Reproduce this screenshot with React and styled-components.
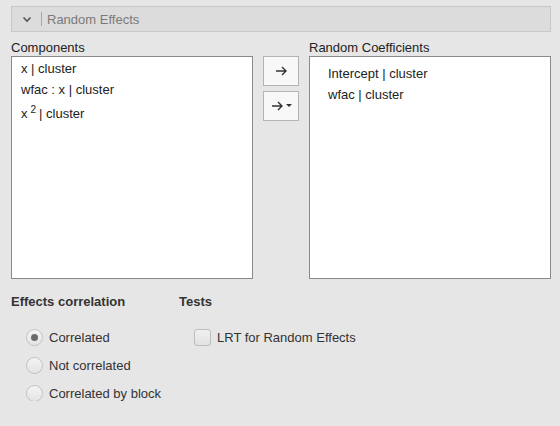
import React from "react";
import styled, { createGlobalStyle } from "styled-components";

const GlobalStyle = createGlobalStyle`
  html, body {
    margin: 0;
    padding: 0;
    background: #e6e6e6;
    font-family: "Liberation Sans", Arial, sans-serif;
    font-size: 13px;
    color: #333333;
  }
`;

const Page = styled.div`
  padding: 6px 10px 0 11px;
  width: 540px;
`;

const SectionHeader = styled.div`
  display: flex;
  align-items: center;
  height: 24px;
  background: #dcdcdc;
  border: 1px solid #c8c8c8;
  color: #7a7a7a;
`;

const Chevron = styled.span`
  display: flex;
  align-items: center;
  justify-content: center;
  width: 29px;
  height: 14px;
  border-right: 1px solid #a8a8a8;
  margin-right: 5px;
`;

const VariablesRow = styled.div`
  display: grid;
  grid-template-columns: 242px 36px 242px;
  column-gap: 10px;
  margin-top: 8px;
`;

const Column = styled.div`
  display: flex;
  flex-direction: column;
`;

const ListLabel = styled.div`
  height: 16px;
  line-height: 16px;
  color: #222;
`;

const ListBox = styled.div`
  box-sizing: border-box;
  height: 223px;
  background: #ffffff;
  border: 1px solid #8a8a8a;
  padding: ${(p) => (p.$wide ? "6px 0 0 18px" : "1px 0 0 9px")};
`;

const ListItem = styled.div`
  height: ${(p) => p.$h || 21}px;
  line-height: ${(p) => p.$h || 21}px;
  color: #222;
  white-space: nowrap;
`;

const Sup = styled.sup`
  font-size: 10px;
  line-height: 0;
  margin: 0 3px 0 3px;
`;

const ButtonStack = styled.div`
  display: flex;
  flex-direction: column;
  gap: 5px;
  padding-top: 16px;
`;

const ArrowButton = styled.button`
  box-sizing: border-box;
  width: 36px;
  height: 30px;
  padding: 0;
  display: flex;
  align-items: center;
  justify-content: center;
  gap: 2px;
  background: #f8f8f8;
  border: 1px solid #b4b4b4;
  border-radius: 0;
`;

const OptionsRow = styled.div`
  display: flex;
  margin-top: 15px;
`;

const Group = styled.div`
  display: flex;
  flex-direction: column;
  width: ${(p) => p.$width || "auto"};
`;

const GroupTitle = styled.div`
  font-weight: bold;
  color: #333;
  height: 16px;
  line-height: 16px;
  margin-bottom: 19px;
`;

const OptionList = styled.div`
  display: flex;
  flex-direction: column;
  gap: 12px;
  padding-left: 15px;
`;

const Option = styled.label`
  display: flex;
  align-items: center;
  height: 16px;
  color: #333;
  gap: 6px;
  white-space: nowrap;
`;

const Radio = styled.span`
  box-sizing: border-box;
  width: 17px;
  height: 17px;
  border-radius: 50%;
  border: 1px solid #c2c2c2;
  background: linear-gradient(#f4f4f4, #e4e4e4);
  display: flex;
  align-items: center;
  justify-content: center;

  &::after {
    content: "";
    width: 7px;
    height: 7px;
    border-radius: 50%;
    background: ${(p) => (p.$checked ? "#6a6a6a" : "transparent")};
  }
`;

const Checkbox = styled.span`
  box-sizing: border-box;
  width: 17px;
  height: 17px;
  border-radius: 3px;
  border: 1px solid #bdbdbd;
  background: linear-gradient(#f0f0f0, #e2e2e2);
`;

const Arrow = () => (
  <svg width="13" height="10" viewBox="0 0 13 10">
    <path d="M1 5h10M7 1l4 4-4 4" fill="none" stroke="#333" strokeWidth="1.4" />
  </svg>
);

const App = () => {
  return (
    <>
      <GlobalStyle />
      <Page>
        <SectionHeader>
          <Chevron>
            <svg width="10" height="7" viewBox="0 0 10 7">
              <path d="M1.5 1.5l3.5 3.5 3.5-3.5" fill="none" stroke="#555" strokeWidth="1.6" />
            </svg>
          </Chevron>
          Random Effects
        </SectionHeader>

        <VariablesRow>
          <Column>
            <ListLabel>Components</ListLabel>
            <ListBox>
              <ListItem>x | cluster</ListItem>
              <ListItem>wfac : x | cluster</ListItem>
              <ListItem $h={27}>
                x<Sup>2</Sup>| cluster
              </ListItem>
            </ListBox>
          </Column>
          <ButtonStack>
            <ArrowButton>
              <Arrow />
            </ArrowButton>
            <ArrowButton>
              <Arrow />
              <svg width="6" height="4" viewBox="0 0 6 4">
                <path d="M0 0h6L3 3z" fill="#333" />
              </svg>
            </ArrowButton>
          </ButtonStack>
          <Column>
            <ListLabel>Random Coefficients</ListLabel>
            <ListBox $wide>
              <ListItem>Intercept | cluster</ListItem>
              <ListItem>wfac | cluster</ListItem>
            </ListBox>
          </Column>
        </VariablesRow>

        <OptionsRow>
          <Group $width="168px">
            <GroupTitle>Effects correlation</GroupTitle>
            <OptionList>
              <Option>
                <Radio $checked />
                Correlated
              </Option>
              <Option>
                <Radio />
                Not correlated
              </Option>
              <Option>
                <Radio />
                Correlated by block
              </Option>
            </OptionList>
          </Group>
          <Group>
            <GroupTitle>Tests</GroupTitle>
            <OptionList>
              <Option>
                <Checkbox />
                LRT for Random Effects
              </Option>
            </OptionList>
          </Group>
        </OptionsRow>
      </Page>
    </>
  );
};

export default App;
